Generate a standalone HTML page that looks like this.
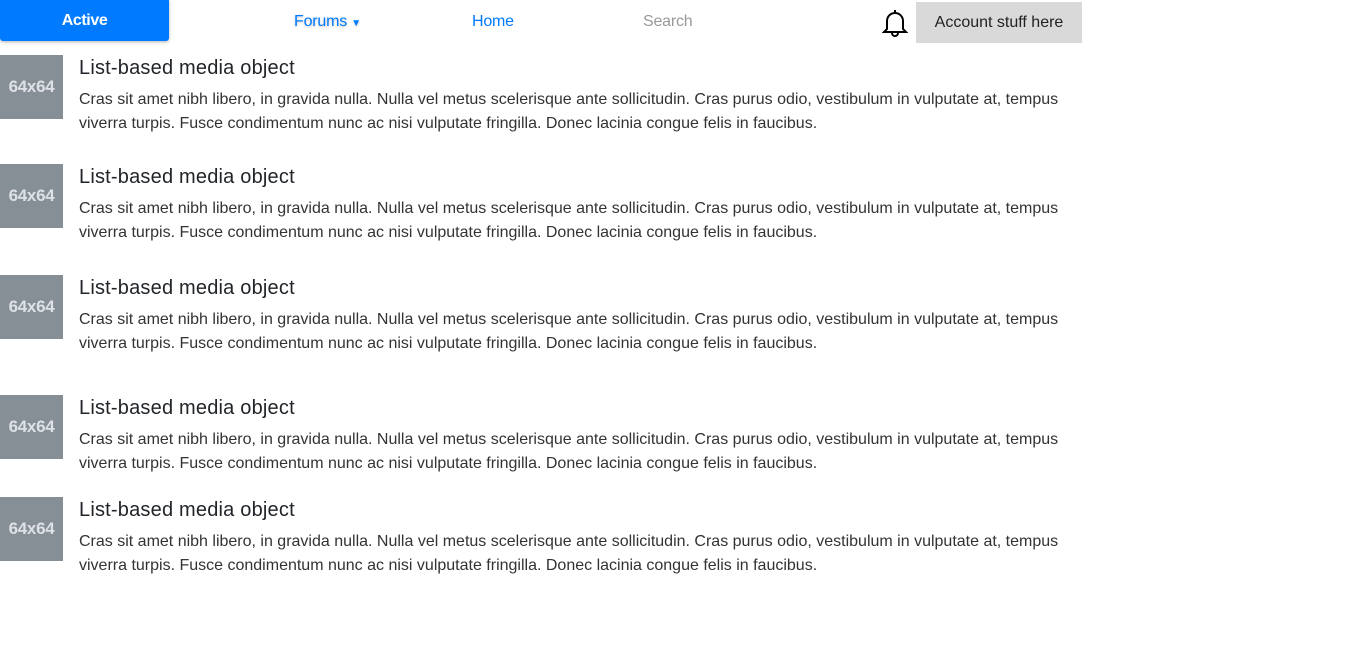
<!DOCTYPE html>
<html><head><meta charset="utf-8"><style>
body{margin:0;width:1368px;height:666px;background:#fff;font-family:"Liberation Sans",sans-serif;position:relative;overflow:hidden}
.active{position:absolute;left:0;top:0;width:169px;height:41px;background:#007bff;color:#fff;border-radius:0 0 3px 3px;box-shadow:0 1px 3px rgba(0,0,0,.3);font-size:16px;line-height:41px;text-align:center;font-weight:bold;letter-spacing:-0.4px}
.lnk{position:absolute;top:1px;line-height:41px;font-size:16px;letter-spacing:-0.2px}
.bell{position:absolute;left:882px;top:8px}
.acct{position:absolute;left:916px;top:2px;width:166px;height:41px;background:#d9d9d9;color:#222;font-size:16px;line-height:41px;text-align:center}
.m{position:absolute;left:0;width:1100px}
.img{position:absolute;left:0;top:0;width:63px;height:64px;background:#868e96;color:#dee2e6;font-size:17px;font-weight:bold;line-height:64px;text-align:center;letter-spacing:-0.3px}
.h{position:absolute;left:79px;top:2px;font-size:20px;color:#212529;white-space:nowrap;letter-spacing:0.2px}
.p{position:absolute;left:79px;top:33px;font-size:16px;line-height:24px;color:#333;white-space:nowrap;letter-spacing:0}
</style></head><body>
<div class="active">Active</div>
<div class="lnk" style="left:294px;color:#007bff;text-shadow:0 1px 2px rgba(0,0,0,.25)">Forums <span style="font-size:10px">▼</span></div>
<div class="lnk" style="left:472px;color:#007bff">Home</div>
<div class="lnk" style="left:643px;color:#999">Search</div>
<svg class="bell" width="26" height="29" viewBox="0 0 26 29" fill="none" stroke="#000" stroke-width="2"><path d="M13 2v2M5 21V13a8 8 0 0 1 16 0v8l3 3H2z"/><path d="M10 25a3 3 0 0 0 6 0"/></svg>
<div class="acct">Account stuff here</div>

<div class="m" style="top:55px"><div class="img">64x64</div><div class="h">List-based media object</div><div class="p">Cras sit amet nibh libero, in gravida nulla. Nulla vel metus scelerisque ante sollicitudin. Cras purus odio, vestibulum in vulputate at, tempus<br>viverra turpis. Fusce condimentum nunc ac nisi vulputate fringilla. Donec lacinia congue felis in faucibus.</div></div>
<div class="m" style="top:164px"><div class="img">64x64</div><div class="h">List-based media object</div><div class="p">Cras sit amet nibh libero, in gravida nulla. Nulla vel metus scelerisque ante sollicitudin. Cras purus odio, vestibulum in vulputate at, tempus<br>viverra turpis. Fusce condimentum nunc ac nisi vulputate fringilla. Donec lacinia congue felis in faucibus.</div></div>
<div class="m" style="top:275px"><div class="img">64x64</div><div class="h">List-based media object</div><div class="p">Cras sit amet nibh libero, in gravida nulla. Nulla vel metus scelerisque ante sollicitudin. Cras purus odio, vestibulum in vulputate at, tempus<br>viverra turpis. Fusce condimentum nunc ac nisi vulputate fringilla. Donec lacinia congue felis in faucibus.</div></div>
<div class="m" style="top:395px"><div class="img">64x64</div><div class="h">List-based media object</div><div class="p">Cras sit amet nibh libero, in gravida nulla. Nulla vel metus scelerisque ante sollicitudin. Cras purus odio, vestibulum in vulputate at, tempus<br>viverra turpis. Fusce condimentum nunc ac nisi vulputate fringilla. Donec lacinia congue felis in faucibus.</div></div>
<div class="m" style="top:497px"><div class="img">64x64</div><div class="h">List-based media object</div><div class="p">Cras sit amet nibh libero, in gravida nulla. Nulla vel metus scelerisque ante sollicitudin. Cras purus odio, vestibulum in vulputate at, tempus<br>viverra turpis. Fusce condimentum nunc ac nisi vulputate fringilla. Donec lacinia congue felis in faucibus.</div></div>
</body></html>
